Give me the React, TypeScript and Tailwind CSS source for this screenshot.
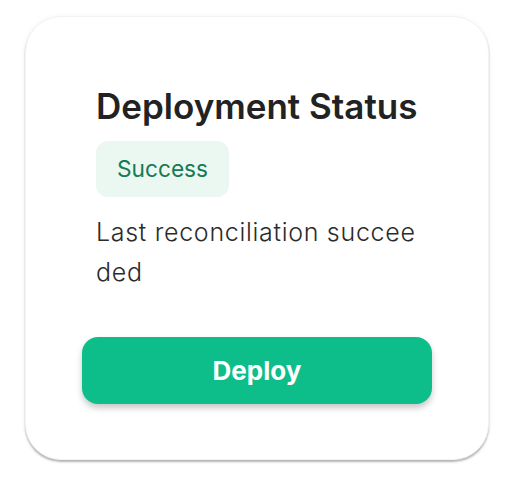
export default function App() {
  return (
    <div className="min-h-screen bg-white p-[16px_25px_20px_25px] font-['Inter',sans-serif]">
      <div className="w-[464px] rounded-[36px] border border-[#f3f3f3] bg-white pb-[55px] pt-[68px] shadow-[0_2px_2px_rgba(0,0,0,0.28),0_0_6px_rgba(0,0,0,0.04)]">
        <div className="px-[70px]">
          <h2 className="text-[35px] font-semibold leading-[42px] text-[#222]">Deployment Status</h2>
          <span className="mt-[14px] inline-flex h-[56px] items-center rounded-[12px] bg-[#ebf7f1] px-[21px] text-[22.7px] text-[#167a52]">
            Success
          </span>
          <p className="mt-[15px] break-all text-[25px] font-light leading-[40px] tracking-[0.7px] text-[#2b2b2b]">
            Last reconciliation succeeded
          </p>
        </div>
        <div className="mt-[45px] px-[56px]">
          <button className="flex h-[67px] w-full items-center justify-center rounded-[16px] bg-[#0ebe8a] text-[26px] font-bold text-white shadow-[0_4px_6px_rgba(0,0,0,0.22)]">
            Deploy
          </button>
        </div>
      </div>
    </div>
  );
}
